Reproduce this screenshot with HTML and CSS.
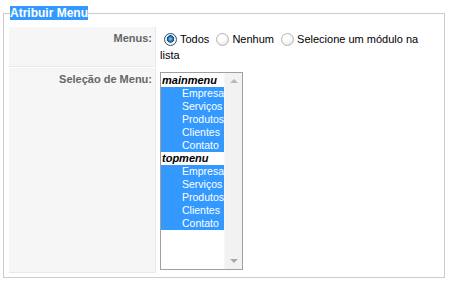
FILE: index.html
```html
<!DOCTYPE html>
<html lang="pt-BR">
<head>
    <meta charset="UTF-8">
    <title>Atribuir Menu</title>
    <link rel="stylesheet" href="styles.css">
</head>
<body>

<fieldset class="adminform">
    <legend>Atribuir Menu</legend>
    <div class="form-grid">
        <div class="key">Menus:</div>
        <div class="value">
            <div class="radios">
                <label><input type="radio" name="menus" checked>Todos</label>
                <label><input type="radio" name="menus">Nenhum</label>
                <label><input type="radio" name="menus">Selecione um módulo na lista</label>
            </div>
        </div>
        <div class="key">Seleção de Menu:</div>
        <div class="value">
            <div class="listbox">
                <div class="list">
                    <div class="group">mainmenu</div>
                    <div class="item">Empresa</div>
                    <div class="item">Serviços</div>
                    <div class="item">Produtos</div>
                    <div class="item">Clientes</div>
                    <div class="item">Contato</div>
                    <div class="group">topmenu</div>
                    <div class="item">Empresa</div>
                    <div class="item">Serviços</div>
                    <div class="item">Produtos</div>
                    <div class="item">Clientes</div>
                    <div class="item">Contato</div>
                </div>
                <div class="scrollbar">
                    <span class="arrow up"></span>
                    <span class="arrow down"></span>
                </div>
            </div>
        </div>
    </div>
</fieldset>

</body>
</html>
```

FILE: styles.css
```css
body {
    margin: 0;
    font-family: "Liberation Sans", Arial, sans-serif;
    font-size: 11px;
    color: #000;
    background: #fff;
}
.adminform {
    margin: 6px 5px 0 3px;
    padding: 6px 3px 3px 4px;
    border: 1px solid #ccc;
}
.adminform legend {
    margin-left: 2px;
    padding: 0;
    background: #3399ff;
    color: #fff;
    font-weight: bold;
    font-size: 12px;
    line-height: 14px;
}
.form-grid {
    display: grid;
    grid-template-columns: 147px 1fr;
    column-gap: 1px;
    row-gap: 1px;
    margin: 1px;
}
.key {
    background: #f6f6f6;
    border-right: 1px solid #e9e9e9;
    border-bottom: 1px solid #e9e9e9;
    color: #666;
    font-weight: bold;
    text-align: right;
    line-height: 14px;
    padding: 4px 3px 4px 4px;
}
.value {
    padding: 4px 3px 3px 3px;
}
.radios {
    max-width: 262px;
    line-height: 16px;
    height: 33px;
}
.radios label {
    white-space: nowrap;
}
.radios label:last-child {
    white-space: normal;
}
.radios input {
    appearance: none;
    width: 13px;
    height: 13px;
    margin: 0 3px 0 4px;
    vertical-align: -3px;
    border: 1px solid #b5b5b5;
    border-radius: 50%;
    background: radial-gradient(circle at 40% 35%, #fff 30%, #dcdcdc 100%);
    box-sizing: border-box;
}
.radios input:checked {
    border-color: #2b4f73;
    background: radial-gradient(circle at 50% 45%, #8fd0f5 0, #2f7fc0 25%, #14456f 42%, #e9eef2 48%, #fff 80%);
}
.listbox {
    display: flex;
    width: 81px;
    height: 196px;
    border: 1px solid #a0a0a0;
    background: #fff;
}
.list {
    width: 63px;
    overflow: hidden;
    white-space: nowrap;
    padding-top: 1px;
}
.group {
    padding-left: 1px;
    font-weight: bold;
    font-style: italic;
    line-height: 13px;
}
.item {
    padding-left: 21px;
    background: #3399ff;
    color: #fff;
    font-size: 10.5px;
    line-height: 13px;
}
.scrollbar {
    position: relative;
    flex: 1;
    background: #f2f2f2;
    border-left: 1px solid #f7f7f7;
}
.arrow {
    position: absolute;
    left: 5px;
    width: 0;
    height: 0;
    border-left: 4px solid transparent;
    border-right: 4px solid transparent;
}
.arrow.up {
    top: 6px;
    border-bottom: 4px solid #b8b8b8;
}
.arrow.down {
    bottom: 6px;
    border-top: 4px solid #a8a8a8;
}
```
